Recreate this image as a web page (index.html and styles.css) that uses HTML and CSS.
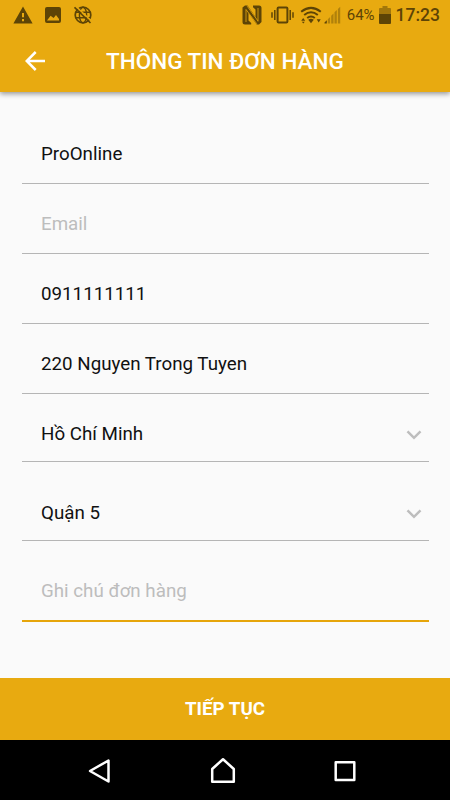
FILE: index.html
```html
<!DOCTYPE html>
<html lang="vi">
  <head>
    <meta charset="UTF-8" />
    <meta name="viewport" content="width=device-width, initial-scale=1.0" />
    <title>Thông tin đơn hàng</title>
    <link rel="stylesheet" href="styles.css">
  </head>
  <body>
    <div class="screen">
      <header class="header">
        <div class="status-bar">
          <svg class="icon-warning" width="20" height="18" viewBox="0 0 20 18">
            <path fill="currentColor" fill-rule="evenodd" d="M10 0.5L19.6 17.5H0.4zM9 7v4.2h2V7zM9 13v2.2h2V13z" />
          </svg>
          <svg class="icon-picture" width="16" height="16" viewBox="0 0 16 16">
            <path fill="currentColor" fill-rule="evenodd" d="M2 0h12a2 2 0 0 1 2 2v12a2 2 0 0 1-2 2H2a2 2 0 0 1-2-2V2a2 2 0 0 1 2-2zM2 13.4h12v-1.5L11 8 8.6 11 5.6 8.8z" />
          </svg>
          <svg class="icon-globe" width="18" height="18" viewBox="0 0 18 18" fill="none" stroke="currentColor">
            <circle cx="9" cy="9" r="7.8" stroke-width="1.7" />
            <ellipse cx="9" cy="9" rx="3.6" ry="7.8" stroke-width="1.4" />
            <path d="M1.5 6.3h15M1.5 11.7h15" stroke-width="1.4" />
            <path class="slash-gap" d="M1.5 0L18 15.5" stroke-width="1.5" />
            <path d="M0.5 1.3L16.5 17" stroke-width="1.7" />
          </svg>
          <div class="status-right">
            <svg class="icon-nfc" width="20" height="20" viewBox="0 0 20 20">
              <path fill="currentColor" d="M0.5 2.5l2.5-2h2.5l8 11.5V4.5L11 2.2V0.5h6q2.5 0 2.5 2.5v14l-2.5 2.5h-2.3L6.5 8v7.5l2.7 2.4v1.6H3Q0.5 19.5 0.5 17z" />
              <path class="nfc-gap" d="M4 17V4.5L14.8 18.8M16 3v13.5M5.2 1.2L16 16" fill="none" stroke-width="0.8" />
            </svg>
            <svg class="icon-vibrate" width="23" height="18" viewBox="0 0 23 18" fill="none" stroke="currentColor" stroke-width="1.5">
              <rect x="6.6" y="1.5" width="9.8" height="15" rx="1" stroke-width="2" />
              <path d="M3.8 4v10M1 6.3v5.4M19.2 4v10M22 6.3v5.4" />
            </svg>
            <svg class="icon-wifi" width="22" height="18" viewBox="0 0 22 18">
              <path d="M1.2 5.8Q11-2 20.8 5.8M4.2 9Q11 3.5 17.8 9M7.2 12.1Q11 9 14.8 12.1" fill="none" stroke="currentColor" stroke-width="2" />
              <path fill="currentColor" d="M8.2 13.7Q11 11.8 13.8 13.7L11 17.3zM1.2 14.7l2-2.7 2 2.7zM1.8 15.8h3L3.3 17.6zM16.7 13.2h4l-2 3.2z" />
            </svg>
            <svg class="icon-signal" width="17" height="18" viewBox="0 0 17 18" fill="currentColor">
              <path d="M0.5 17.5v-1l2.3-2.3v3.3z" />
              <path opacity=".4" d="M3.8 17.5v-4.3l2.3-2.3v6.6zM7.2 17.5V9.8l2.3-2.3v10zM10.5 17.5V6.3L12.8 4v13.5zM13.9 17.5V3L16.2.7v16.8z" />
            </svg>
            <span class="battery-text">64%</span>
            <svg class="icon-battery" width="12" height="18" viewBox="0 0 12 18" fill="currentColor">
              <path opacity=".5" d="M3.5 0h5v2H11q1 0 1 1v5H0V3q0-1 1-1h2.5z" />
              <path d="M0 8h12v9q0 1-1 1H1q-1 0-1-1z" />
            </svg>
            <span class="clock">17:23</span>
          </div>
        </div>
        <div class="app-bar">
          <svg class="icon-back" width="20" height="20" viewBox="0 0 20 20" fill="none" stroke="currentColor" stroke-width="2.5">
            <path d="M20 10H2M10.7 1L1.7 10l9 9" />
          </svg>
          <h1>THÔNG TIN ĐƠN HÀNG</h1>
        </div>
      </header>

      <main class="form">
        <div class="field"><span>ProOnline</span></div>
        <div class="field placeholder"><span>Email</span></div>
        <div class="field phone"><span>0911111111</span></div>
        <div class="field"><span>220 Nguyen Trong Tuyen</span></div>
        <div class="field select city">
          <span>Hồ Chí Minh</span>
          <svg class="icon-arrow" width="16" height="10" viewBox="0 0 16 10" fill="none" stroke="currentColor" stroke-width="2.5">
            <path d="M1.5 1.3L8 7.8l6.5-6.5" />
          </svg>
        </div>
        <div class="field select district">
          <span>Quận 5</span>
          <svg class="icon-arrow" width="16" height="10" viewBox="0 0 16 10" fill="none" stroke="currentColor" stroke-width="2.5">
            <path d="M1.5 1.3L8 7.8l6.5-6.5" />
          </svg>
        </div>
        <div class="field placeholder note"><span>Ghi chú đơn hàng</span></div>
      </main>

      <div class="submit">TIẾP TỤC</div>

      <nav class="nav-bar">
        <svg width="30" height="30" viewBox="0 0 30 30">
          <path d="M5 15L23.5 4.5v21z" />
        </svg>
        <svg width="30" height="30" viewBox="0 0 30 30">
          <path d="M4.2 13L15 3.2 25.8 13v12.8H4.2z" />
        </svg>
        <svg width="30" height="30" viewBox="0 0 30 30">
          <path d="M5.7 6.2h18.6v17.8H5.7z" />
        </svg>
      </nav>
    </div>
  </body>
</html>
```
FILE: styles.css
```css
* {
  margin: 0;
  padding: 0;
  box-sizing: border-box;
}

body {
  font-family: "Roboto", sans-serif;
  background: #fafafa;
  color: #111;
}

svg {
  display: block;
  flex-shrink: 0;
}

.screen {
  height: 800px;
  display: flex;
  flex-direction: column;
}

.header {
  height: 92px;
  background: #e8aa10;
  box-shadow: 0 2px 5px rgba(0, 0, 0, 0.4);
}

.status-bar {
  height: 30px;
  display: flex;
  align-items: center;
  padding: 0 10px 0 13px;
  color: #5d4406;
}

.icon-picture {
  margin-left: 12px;
}

.icon-globe {
  margin-left: 13px;
}

.slash-gap,
.nfc-gap {
  stroke: #e8aa10;
}

.status-right {
  display: flex;
  align-items: center;
  margin-left: auto;
}

.icon-vibrate {
  margin-left: 9px;
}

.icon-wifi {
  margin-left: 6px;
}

.icon-signal {
  margin-left: 2px;
}

.battery-text {
  margin-left: 6px;
  font-size: 15px;
  line-height: 18px;
}

.icon-battery {
  margin-left: 4px;
}

.clock {
  margin-left: 5px;
  font-size: 17.5px;
  font-weight: 500;
  line-height: 20px;
}

.app-bar {
  height: 62px;
  display: flex;
  align-items: center;
  padding-left: 25px;
  color: #fff;
}

.app-bar h1 {
  margin-left: 61px;
  font-size: 22.5px;
  font-weight: 500;
  line-height: 26px;
  white-space: nowrap;
}

.form {
  flex: 1;
  padding: 22px 21px 0 22px;
}

.field {
  height: 70px;
  padding: 30px 7px 0 19px;
  border-bottom: 1px solid #b5b5b5;
  font-size: 18.75px;
  line-height: 20px;
}

.placeholder {
  color: #bdbdbd;
}

.select {
  display: flex;
  justify-content: space-between;
  align-items: flex-start;
}

.icon-arrow {
  margin-top: 6px;
  color: #bdbdbd;
}

.city {
  height: 68px;
}

.district {
  height: 79px;
  padding-top: 41px;
}

.note {
  height: 81px;
  padding-top: 40px;
  border-bottom: 2px solid #e6a50a;
}

.submit {
  height: 62px;
  background: #e8aa10;
  color: #fff;
  font-size: 18.75px;
  font-weight: 700;
  line-height: 62px;
  text-align: center;
}

.nav-bar {
  height: 60px;
  display: flex;
  justify-content: space-between;
  align-items: center;
  padding: 2px 90px 0 85px;
  background: #000;
}

.nav-bar path {
  fill: none;
  stroke: #fff;
  stroke-width: 2.5;
  stroke-linejoin: round;
}
```
